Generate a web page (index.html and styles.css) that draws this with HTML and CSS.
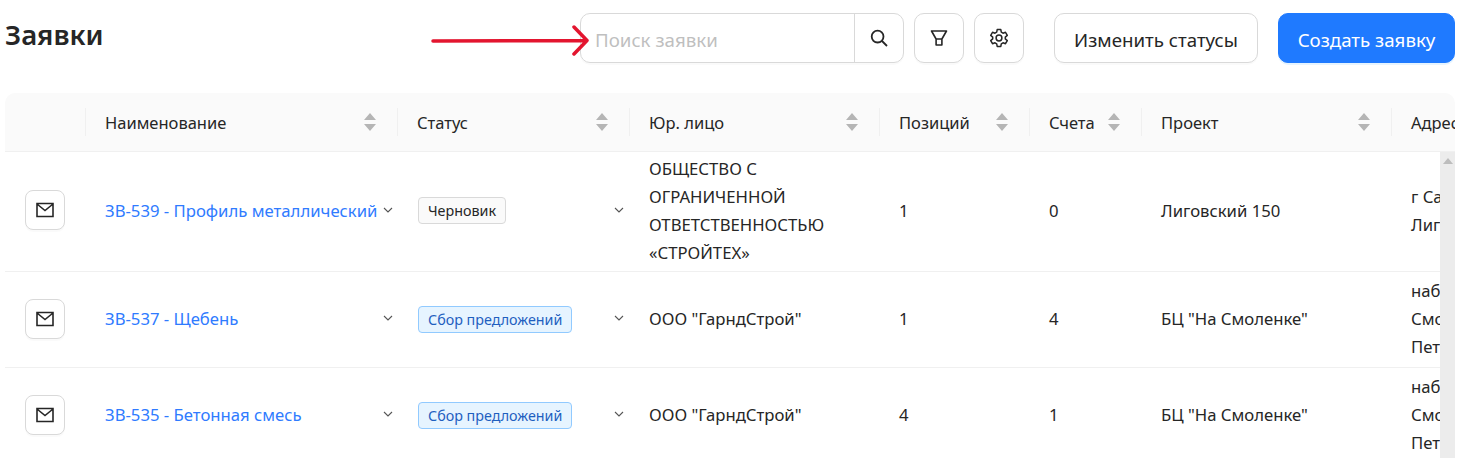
FILE: index.html
```html
<!DOCTYPE html>
<html lang="ru">
<head>
    <meta charset="UTF-8">
    <title>Заявки</title>
    <link rel="stylesheet" href="styles.css">
</head>
<body>
    <svg width="0" height="0" class="defs">
        <symbol id="mail" viewBox="0 0 18 16"><path d="M1 1.500h16v13H1z M1 2l8 6.500L17 2" fill="none" stroke="currentColor" stroke-width="1.600"/></symbol>
        <symbol id="chev" viewBox="0 0 10 6"><path d="M1 1l4 4 4-4" fill="none" stroke="currentColor" stroke-width="1.100"/></symbol>
        <symbol id="sort" viewBox="0 0 12 18"><path d="M6 0l6 7H0z M6 18l6-7H0z" fill="currentColor"/></symbol>
    </svg>

    <div class="page">
        <header class="topbar">
            <h1>Заявки</h1>
            <div class="tools">
                <div class="search">
                    <input class="search-input" type="text" placeholder="Поиск заявки">
                    <button class="search-btn">
                        <svg width="20" height="20" viewBox="0 0 20 20"><circle cx="8.600" cy="8.600" r="5.900" fill="none" stroke="currentColor" stroke-width="1.800"/><path d="M13 13l5 5" stroke="currentColor" stroke-width="1.800"/></svg>
                    </button>
                </div>
                <button class="btn-icon">
                    <svg width="20" height="20" viewBox="0 0 20 20"><path d="M2.500 3h15l-4.600 8H7.100z M7.100 11h5.800v6H7.100z" fill="none" stroke="currentColor" stroke-width="1.600" stroke-linejoin="round"/></svg>
                </button>
                <button class="btn-icon">
                    <svg width="20" height="20" viewBox="0 0 20 20"><path d="M8.200 1.600h3.600l.5 2.600 1.700 1 2.500-.9 1.800 3.100-2 1.700v1.800l2 1.700-1.800 3.100-2.500-.9-1.700 1-.5 2.600H8.200l-.5-2.600-1.700-1-2.500.9-1.800-3.100 2-1.700V9.100l-2-1.700 1.800-3.100 2.500.9 1.700-1z" fill="none" stroke="currentColor" stroke-width="1.500" stroke-linejoin="round"/><circle cx="10" cy="10" r="2.900" fill="none" stroke="currentColor" stroke-width="1.500"/></svg>
                </button>
                <button class="btn btn-status">Изменить статусы</button>
                <button class="btn btn-primary">Создать заявку</button>
            </div>
        </header>

        <div class="arrow">
            <svg width="160" height="32" viewBox="0 0 160 32"><path d="M3 17L155 16.500M144 3l13 13.500L144 30" fill="none" stroke="#e3152f" stroke-width="3.500" stroke-linecap="round" stroke-linejoin="round"/></svg>
        </div>

        <div class="table-wrap">
            <table class="orders">
                <colgroup>
                    <col class="c-mail"><col class="c-name"><col class="c-status"><col class="c-org">
                    <col class="c-pos"><col class="c-bills"><col class="c-project"><col class="c-addr">
                </colgroup>
                <thead>
                    <tr>
                        <th></th>
                        <th><div class="th-in">Наименование<svg class="sort"><use href="#sort"/></svg></div></th>
                        <th><div class="th-in">Статус<svg class="sort"><use href="#sort"/></svg></div></th>
                        <th><div class="th-in">Юр. лицо<svg class="sort"><use href="#sort"/></svg></div></th>
                        <th><div class="th-in">Позиций<svg class="sort"><use href="#sort"/></svg></div></th>
                        <th><div class="th-in">Счета<svg class="sort"><use href="#sort"/></svg></div></th>
                        <th><div class="th-in">Проект<svg class="sort"><use href="#sort"/></svg></div></th>
                        <th><div class="th-in">Адрес</div></th>
                    </tr>
                </thead>
                <tbody>
                    <tr class="row-tall">
                        <td><button class="btn-mail"><svg width="18" height="16"><use href="#mail"/></svg></button></td>
                        <td class="cell-name"><div class="cell-flex"><a href="#">ЗВ-539 - Профиль металлический</a><svg class="chev"><use href="#chev"/></svg></div></td>
                        <td class="cell-status"><div class="cell-flex"><span class="tag">Черновик</span><svg class="chev"><use href="#chev"/></svg></div></td>
                        <td>ОБЩЕСТВО С ОГРАНИЧЕННОЙ ОТВЕТСТВЕННОСТЬЮ «СТРОЙТЕХ»</td>
                        <td>1</td>
                        <td>0</td>
                        <td>Лиговский 150</td>
                        <td>г Санкт-Петербург,<br>Лиговский 150</td>
                    </tr>
                    <tr>
                        <td><button class="btn-mail"><svg width="18" height="16"><use href="#mail"/></svg></button></td>
                        <td class="cell-name"><div class="cell-flex"><a href="#">ЗВ-537 - Щебень</a><svg class="chev"><use href="#chev"/></svg></div></td>
                        <td class="cell-status"><div class="cell-flex"><span class="tag tag-blue">Сбор предложений</span><svg class="chev"><use href="#chev"/></svg></div></td>
                        <td>ООО "ГарндСтрой"</td>
                        <td>1</td>
                        <td>4</td>
                        <td>БЦ "На Смоленке"</td>
                        <td>наб реки<br>Смоленки,<br>Петербург</td>
                    </tr>
                    <tr>
                        <td><button class="btn-mail"><svg width="18" height="16"><use href="#mail"/></svg></button></td>
                        <td class="cell-name"><div class="cell-flex"><a href="#">ЗВ-535 - Бетонная смесь</a><svg class="chev"><use href="#chev"/></svg></div></td>
                        <td class="cell-status"><div class="cell-flex"><span class="tag tag-blue">Сбор предложений</span><svg class="chev"><use href="#chev"/></svg></div></td>
                        <td>ООО "ГарндСтрой"</td>
                        <td>4</td>
                        <td>1</td>
                        <td>БЦ "На Смоленке"</td>
                        <td>наб реки<br>Смоленки,<br>Петербург</td>
                    </tr>
                </tbody>
            </table>
            <div class="scrollbar"><span class="scroll-up"></span></div>
        </div>
    </div>
</body>
</html>
```

FILE: styles.css
```css
* {
    box-sizing: border-box;
}

html, body {
    height: 100%;
}

body {
    margin: 0;
    background: #fff;
    color: #262626;
    font-family: "Noto Sans", "Open Sans", sans-serif;
    font-size: 16.5px;
    overflow: hidden;
}

button, input {
    font-family: inherit;
    color: inherit;
}

.defs {
    position: absolute;
}

.page {
    position: relative;
    height: 458px;
    padding: 13px 10px 0 5px;
    overflow: hidden;
}

.topbar {
    display: flex;
    justify-content: space-between;
    height: 50px;
    margin-bottom: 30px;
}

h1 {
    margin: 0;
    font-size: 27.500px;
    line-height: 44px;
    font-weight: 600;
}

.tools {
    display: flex;
}

.search {
    display: flex;
    width: 324px;
    height: 50px;
    border: 1px solid #d9d9d9;
    border-radius: 10px;
    box-shadow: 0 2px 0 rgba(0, 0, 0, 0.02);
}

.search-input {
    flex: 1;
    min-width: 0;
    padding: 3px 14px 0;
    border: 0;
    background: none;
    font-size: 18.700px;
    outline: none;
}

.search-input::placeholder {
    color: #bfbfbf;
}

.search-btn {
    width: 49px;
    display: flex;
    align-items: center;
    justify-content: center;
    padding: 0;
    border: 0;
    border-left: 1px solid #d9d9d9;
    background: none;
}

.btn-icon {
    width: 50px;
    height: 50px;
    margin-left: 10px;
    display: flex;
    align-items: center;
    justify-content: center;
    padding: 0;
    background: #fff;
    border: 1px solid #d9d9d9;
    border-radius: 10px;
    box-shadow: 0 2px 0 rgba(0, 0, 0, 0.02);
}

.btn {
    height: 50px;
    padding: 3px 0 0;
    font-size: 18.700px;
    background: #fff;
    border: 1px solid #d9d9d9;
    border-radius: 10px;
    box-shadow: 0 2px 0 rgba(0, 0, 0, 0.02);
}

.btn-status {
    width: 204px;
    margin-left: 30px;
}

.btn-primary {
    width: 177px;
    margin-left: 20px;
    color: #fff;
    background: #1f7aff;
    border-color: #1f7aff;
    box-shadow: 0 2px 0 rgba(5, 145, 255, 0.1);
}

.arrow {
    position: absolute;
    left: 430px;
    top: 24px;
    line-height: 0;
}

.table-wrap {
    position: relative;
    height: 400px;
    overflow: hidden;
    border-radius: 10px 10px 0 0;
}

.orders {
    width: 1700px;
    table-layout: fixed;
    border-collapse: collapse;
}

.c-mail { width: 80px; }
.c-name { width: 312px; }
.c-status { width: 232px; }
.c-org { width: 250px; }
.c-pos { width: 150px; }
.c-bills { width: 112px; }
.c-project { width: 250px; }
.c-addr { width: 314px; }

.orders th {
    height: 58px;
    padding: 0;
    background: #fafafa;
    border-bottom: 1px solid #f0f0f0;
    font-weight: 400;
    text-align: left;
}

.th-in {
    display: flex;
    align-items: center;
    justify-content: space-between;
    height: 28px;
    padding: 2px 21px 0 19px;
    border-left: 1px solid #f0f0f0;
}

.sort {
    width: 12px;
    height: 18px;
    margin-bottom: 2px;
    color: #b5b5b5;
    flex: none;
}

.orders td {
    height: 96px;
    padding: 4px 20px;
    border-bottom: 1px solid #f0f0f0;
    font-size: 16.700px;
    line-height: 28px;
    vertical-align: middle;
}

.orders .row-tall td {
    height: 119px;
    padding: 3px 20px 4px;
}

.orders .cell-name,
.orders .row-tall .cell-name {
    padding-right: 4px;
}

.orders .cell-status,
.orders .row-tall .cell-status {
    padding-left: 21px;
    padding-right: 5px;
}

.cell-flex {
    display: flex;
    align-items: center;
    justify-content: space-between;
}

.cell-name a {
    color: #2f7bff;
    text-decoration: none;
}

.chev {
    width: 10px;
    height: 6px;
    color: #555;
    flex: none;
    margin-bottom: 2px;
}

.btn-mail {
    width: 40px;
    height: 40px;
    display: flex;
    align-items: center;
    justify-content: center;
    padding: 0;
    background: #fff;
    border: 1px solid #d9d9d9;
    border-radius: 8px;
    box-shadow: 0 2px 0 rgba(0, 0, 0, 0.02);
}

.row-tall .btn-mail {
    margin-bottom: 2px;
}

.tag {
    display: inline-block;
    height: 27px;
    padding: 0 9px;
    font-size: 14.300px;
    line-height: 25px;
    color: #262626;
    background: #fafafa;
    border: 1px solid #d9d9d9;
    border-radius: 4px;
}

.tag-blue {
    color: #1f5fbf;
    background: #e6f4ff;
    border-color: #91caff;
}

.scrollbar {
    position: absolute;
    right: 0;
    top: 59px;
    bottom: 0;
    width: 15px;
    background: #ececec;
}

.scroll-up {
    display: block;
    width: 0;
    margin: 6px auto 0;
    border: 5px solid transparent;
    border-top: 0;
    border-bottom: 6px solid #bdbdbd;
}
```
